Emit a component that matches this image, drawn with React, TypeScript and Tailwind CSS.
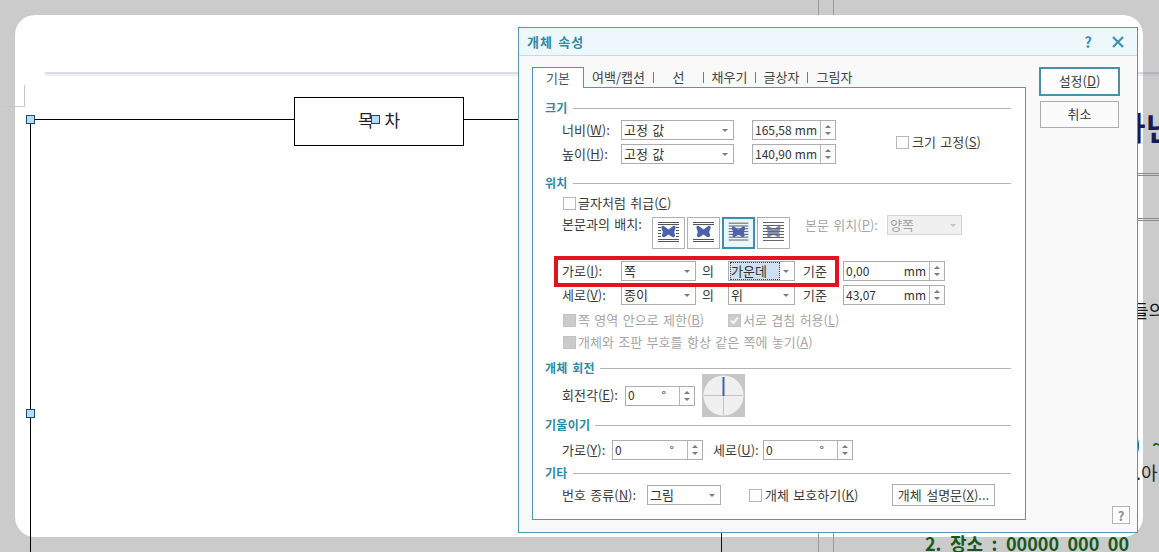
import React from "react";

const teal = "text-[#2b8aa6]";

function Caret({ className = "" }: { className?: string }) {
  return (
    <svg width="6" height="3" viewBox="0 0 6 3" className={"shrink-0 " + className}>
      <polygon points="0,0 6,0 3,3" fill="currentColor" />
    </svg>
  );
}

function SpinArrows() {
  return (
    <div className="w-[15px] shrink-0 border-l border-[#b8b8b8] flex flex-col items-center justify-center gap-[4px] text-[#7c7c7c] bg-[#fbfbfb]">
      <Caret className="rotate-180" />
      <Caret />
    </div>
  );
}

function Spin({ className, value, unit, unitClass = "pr-[3px]" }: { className: string; value: string; unit: string; unitClass?: string }) {
  return (
    <div className={"flex h-5 shrink-0 border border-[#adadad] bg-white " + className}>
      <div className={"flex-1 flex items-center justify-between pl-[2px] pb-px text-[12px] text-[#333] " + unitClass}>
        <span>{value}</span>
        <span>{unit}</span>
      </div>
      <SpinArrows />
    </div>
  );
}

function Combo({ className, value, focus = false, disabled = false }: { className: string; value: string; focus?: boolean; disabled?: boolean }) {
  return (
    <div
      className={
        "flex h-5 shrink-0 items-center border justify-between text-[13px] leading-none " +
        (disabled ? "border-[#d4d4d4] bg-[#f0f0f0] text-[#a0a0a0] " : "border-[#adadad] bg-white text-[#333] ") +
        className
      }
    >
      {focus ? (
        <span className="ml-px w-[50px] h-[18px] flex items-center pb-[2px] bg-[#cfe0f1] border border-dotted border-[#444]">{value}</span>
      ) : (
        <span className="pl-[2px] pb-[2px]">{value}</span>
      )}
      <Caret className={"mr-[5px] " + (disabled ? "text-[#c4c4c4]" : "text-[#7c7c7c]")} />
    </div>
  );
}

function Check({ disabled = false, checked = false }: { disabled?: boolean; checked?: boolean }) {
  return (
    <span
      className={
        "w-[13px] h-[13px] shrink-0 border flex items-center justify-center " +
        (disabled ? "border-[#c4c4c4] bg-[#cbcbcb]" : "border-[#b8b8b8] bg-[#fdfdfd]")
      }
    >
      {checked && (
        <svg width="11" height="11" viewBox="0 0 11 11">
          <path d="M2 5.5 L4.5 8 L9 2.5" stroke="#f4f4f4" strokeWidth="2" fill="none" />
        </svg>
      )}
    </span>
  );
}

function Heading({ children, className = "" }: { children: React.ReactNode; className?: string }) {
  return (
    <div className={"flex items-center h-[14px] gap-[5px] " + className}>
      <span className={"text-[12px] font-bold leading-none tracking-[0.3px] " + teal}>{children}</span>
      <span className="flex-1 h-px bg-[#b2b2b2]" />
    </div>
  );
}

function Label({ className, children, muted = false }: { className: string; children: React.ReactNode; muted?: boolean }) {
  return <span className={"shrink-0 text-[13px] leading-none pb-[2px] whitespace-nowrap " + (muted ? "text-[#a6a6a6] " : "text-[#3c3c3c] ") + className}>{children}</span>;
}

const BUTTERFLY =
  "M16.5 12.5 L11.5 8.8 Q9 8.4 9.4 11 L10.8 15 L9.9 18.2 Q10.2 21 12.8 20 L16.5 17.5 L20.2 20 Q22.8 21 23.1 18.2 L22.2 15 L23.6 11 Q24 8.4 21.5 8.8 Z";

function WrapIcon({ kind }: { kind: number }) {
  const full = (ys: number[], c = "#555") =>
    ys.map((y) => <line key={y} x1="6" x2="27" y1={y} y2={y} stroke={c} strokeWidth="1" />);
  const side = [10.5, 13.5, 16.5, 19.5];
  return (
    <svg width="31" height="30" viewBox="1 1 31 30">
      {kind === 0 && (
        <>
          {full([5.5, 7.5, 22.5, 24.5])}
          {side.map((y) => (
            <g key={y}>
              <line x1="6" x2="9" y1={y} y2={y} stroke="#555" />
              <line x1="24" x2="27" y1={y} y2={y} stroke="#555" />
            </g>
          ))}
          <path d={BUTTERFLY} fill="#4c62ac" />
        </>
      )}
      {kind === 1 && (
        <>
          {full([5.5, 7.5, 22.5, 24.5])}
          <path d={BUTTERFLY} fill="#4c62ac" />
        </>
      )}
      {kind === 2 && (
        <>
          {full([5.5, 8.5, 11.5, 14.5, 17.5, 20.5, 23.5])}
          <path d={BUTTERFLY} fill="#4c62ac" />
        </>
      )}
      {kind === 3 && (
        <>
          <path d={BUTTERFLY} fill="#868eb4" />
          {full([5.5, 8.5, 11.5, 14.5, 17.5, 20.5, 23.5], "#666")}
        </>
      )}
    </svg>
  );
}

function Dial() {
  return (
    <svg width="43" height="43" viewBox="0 0 43 43" className="shrink-0 ml-[7px]">
      <rect width="43" height="43" fill="#c6c6c6" />
      <circle cx="21.5" cy="21.5" r="20" fill="#f0f0f0" />
      <line x1="2" x2="41" y1="21.5" y2="21.5" stroke="#c4c4c4" />
      <line x1="21.5" x2="21.5" y1="21" y2="41" stroke="#c4c4c4" />
      <line x1="21.5" x2="21.5" y1="3" y2="22" stroke="#3f62ad" strokeWidth="2" />
    </svg>
  );
}

function Handle({ className }: { className: string }) {
  return <span className={"absolute w-[9px] h-[9px] border border-[#1c4a68] bg-[#b5dcf9] " + className} />;
}

export default function App() {
  return (
    <div className="relative w-[1159px] h-[552px] overflow-hidden bg-[#cbcbcb] p-[15px] [word-spacing:1.5px] font-['Noto_Sans_CJK_KR','Noto_Sans',sans-serif]">
      <div className="w-[1128px] h-[522px] rounded-[20px] bg-white" />

      {/* document behind the dialog */}
      <span className="absolute left-[818px] top-0 w-px h-[15px] bg-[#9a9a9a]" />
      <span className="absolute left-[833px] top-0 w-px h-[15px] bg-[#9a9a9a]" />
      <span className="absolute left-[721px] top-[532px] w-px h-[20px] bg-[#111]" />
      <span className="absolute left-[818px] top-[532px] w-px h-[20px] bg-[#9a9a9a]" />
      <span className="absolute left-[833px] top-[532px] w-px h-[20px] bg-[#9a9a9a]" />

      <span className="absolute left-[45px] top-[72px] w-[1098px] h-[4px] bg-[#eeedf4] border-t-2 border-[#dcdce8]" />
      <span className="absolute left-[1143px] top-[72px] w-[16px] h-[4px] bg-[#c2c2c8] border-t-2 border-[#b4b4bc]" />
      <span className="absolute left-[1137px] top-[173px] w-[22px] h-px bg-[#8a8a8a]" />
      <span className="absolute left-[1137px] top-[175px] w-[22px] h-px bg-[#8a8a8a]" />
      <span className="absolute left-[1137px] top-[218px] w-[22px] h-px bg-[#8a8a8a]" />
      <span className="absolute left-[1137px] top-[220px] w-[22px] h-px bg-[#8a8a8a]" />

      <span className="absolute left-[24px] top-[85px] w-px h-[21px] bg-[#c8c8c8]" />
      <span className="absolute left-[3px] top-[106px] w-[22px] h-px bg-[#c8c8c8]" />

      <span className="absolute left-[30px] top-[119px] w-[264px] h-px bg-black" />
      <span className="absolute left-[464px] top-[119px] w-[55px] h-px bg-black" />
      <span className="absolute left-[30px] top-[119px] w-px h-[433px] bg-black" />
      <div className="absolute left-[294px] top-[97px] w-[170px] h-[49px] border border-black bg-white flex items-center justify-center pb-[3px] text-[17px] text-[#222] tracking-[2px] [word-spacing:3px] pl-[2px]">
        목 차
      </div>
      <Handle className="left-[26px] top-[115px]" />
      <Handle className="left-[371px] top-[115px]" />
      <Handle className="left-[26px] top-[409px]" />

      <span className="absolute left-[1116px] top-[107px] text-[32px] leading-[38px] font-bold text-[#1b1b52] whitespace-nowrap">바닌</span>
      <span className="absolute left-[1132px] top-[297px] text-[18px] leading-[26px] text-[#111] whitespace-nowrap">들의</span>
      <span className="absolute left-[1133px] top-[431px] text-[20px] leading-[26px] font-bold text-[#17601f] whitespace-nowrap [word-spacing:7px]">) ~</span>
      <span className="absolute left-[1136px] top-[459px] text-[18px] leading-[26px] text-[#222] whitespace-nowrap">.아</span>
      <span className="absolute left-[925px] top-[530px] text-[18px] leading-[26px] font-bold text-[#17591c] whitespace-nowrap [word-spacing:4.4px]">2. 장소 : 00000 000 00</span>

      {/* dialog */}
      <div className="absolute left-[518px] top-[27px] w-[620px] h-[506px] border border-[#4f9bb2] bg-[#f9f9f9] flex flex-col">
        <div className="h-[28px] shrink-0 flex items-center pl-[8px] bg-[#eef7fb] border-b border-[#c6dbe6]">
          <span className={"text-[13px] font-bold leading-none tracking-[1px] " + teal}>개체 속성</span>
          <span className="ml-auto mr-[20px] text-[15px] font-bold leading-none text-[#3a93b2]">?</span>
          <svg width="12" height="12" viewBox="0 0 12 12" className="mr-[13px]">
            <path d="M1 1 L11 11 M11 1 L1 11" stroke="#3a93b2" strokeWidth="2.2" />
          </svg>
        </div>

        <div className="flex pl-[13px] pt-[11px]">
          {/* tabs + panel */}
          <div className="w-[494px] shrink-0">
            <div className="relative z-10 -mb-px flex items-center h-[21px] text-[13px] leading-none text-[#444]">
              <div className="w-[52px] h-[21px] border border-b-0 border-[#4a9ab0] bg-white flex items-center justify-center pb-[2px] text-[#555]">기본</div>
              <div className="w-[69px] text-center pb-[2px]">여백/캡션</div>
              <span className="w-px h-[11px] bg-[#777]" />
              <div className="w-[49px] text-center pb-[2px]">선</div>
              <span className="w-px h-[11px] bg-[#777]" />
              <div className="w-[51px] text-center pb-[2px]">채우기</div>
              <span className="w-px h-[11px] bg-[#777]" />
              <div className="w-[51px] text-center pb-[2px]">글상자</div>
              <span className="w-px h-[11px] bg-[#777]" />
              <div className="w-[53px] text-center pb-[2px]">그림자</div>
            </div>

            <div className="relative h-[433px] border border-[#4a9ab0] bg-white pl-[12px] pr-[14px]">
              <Heading className="mt-[13px]">크기</Heading>
              <div className="flex items-center ml-[17px] mt-[5px]">
                <div className="flex flex-col gap-1">
                  <div className="flex items-center">
                    <Label className="w-[59px]">너비(<u>W</u>):</Label>
                    <Combo className="w-[113px]" value="고정 값" />
                    <Spin className="w-[84px] ml-[18px]" value="165,58" unit="mm" />
                  </div>
                  <div className="flex items-center">
                    <Label className="w-[59px]">높이(<u>H</u>):</Label>
                    <Combo className="w-[113px]" value="고정 값" />
                    <Spin className="w-[84px] ml-[18px]" value="140,90" unit="mm" />
                  </div>
                </div>
                <div className="flex items-center ml-[60px] gap-[3px]">
                  <Check />
                  <Label className="">크기 고정(<u>S</u>)</Label>
                </div>
              </div>

              <Heading className="mt-[12px]">위치</Heading>
              <div className="flex items-center ml-[18px] mt-[6px] h-[14px] gap-[2px]">
                <Check />
                <Label className="">글자처럼 취급(<u>C</u>)</Label>
              </div>
              <div className="flex items-start ml-[17px] mt-[7px]">
                <Label className="w-[90px]">본문과의 배치:</Label>
                <div className="flex gap-[2px]">
                  {[0, 1, 2, 3].map((k) => (
                    <div
                      key={k}
                      className={
                        "w-[33px] h-[32px] flex items-center justify-center " +
                        (k === 2 ? "border-2 border-[#3d8fb0] bg-[#e9f6fb]" : "border border-[#b0b0b0] bg-white")
                      }
                    >
                      <WrapIcon kind={k} />
                    </div>
                  ))}
                </div>
                <Label muted className="ml-[15px] w-[82px] mt-[1px]">본문 위치(<u>P</u>):</Label>
                <Combo disabled className="w-[75px] -mt-[2px]" value="양쪽" />
              </div>

              <div className="flex items-center ml-[17px] mt-[12px]">
                <Label className="w-[59px]">가로(<u>I</u>):</Label>
                <Combo className="w-[75px]" value="쪽" />
                <Label className="w-[32px] pl-[6px]">의</Label>
                <Combo focus className="w-[67px]" value="가운데" />
                <Label className="w-[48px] pl-[8px]">기준</Label>
                <Spin className="w-[102px]" value="0,00" unit="mm" />
              </div>
              <div className="flex items-center ml-[17px] mt-[4px]">
                <Label className="w-[59px]">세로(<u>V</u>):</Label>
                <Combo className="w-[75px]" value="종이" />
                <Label className="w-[32px] pl-[6px]">의</Label>
                <Combo className="w-[67px]" value="위" />
                <Label className="w-[48px] pl-[8px]">기준</Label>
                <Spin className="w-[102px]" value="43,07" unit="mm" />
              </div>

              <div className="flex items-center ml-[18px] mt-[9px] h-[13px]">
                <div className="w-[165px] flex items-center gap-[2px]">
                  <Check disabled />
                  <Label muted className="">쪽 영역 안으로 제한(<u>B</u>)</Label>
                </div>
                <div className="flex items-center gap-[2px]">
                  <Check disabled checked />
                  <Label muted className="">서로 겹침 허용(<u>L</u>)</Label>
                </div>
              </div>
              <div className="flex items-center ml-[18px] mt-[9px] h-[13px] gap-[2px]">
                <Check disabled />
                <Label muted className="">개체와 조판 부호를 항상 같은 쪽에 놓기(<u>A</u>)</Label>
              </div>

              <Heading className="mt-[12px]">개체 회전</Heading>
              <div className="flex items-center ml-[17px] -mt-px">
                <Label className="w-[63px]">회전각(<u>E</u>):</Label>
                <Spin className="w-[70px]" value="0" unit="°" unitClass="pr-[13px]" />
                <Dial />
              </div>

              <Heading className="mt-px">기울이기</Heading>
              <div className="flex items-center ml-[17px] mt-[8px]">
                <Label className="w-[50px]">가로(<u>Y</u>):</Label>
                <Spin className="w-[91px]" value="0" unit="°" unitClass="pr-[13px]" />
                <Label className="w-[50px] ml-[10px]">세로(<u>U</u>):</Label>
                <Spin className="w-[90px]" value="0" unit="°" unitClass="pr-[13px]" />
              </div>

              <Heading className="mt-[6px]">기타</Heading>
              <div className="flex items-center ml-[17px] mt-[4px]">
                <Label className="w-[85px]">번호 종류(<u>N</u>):</Label>
                <Combo className="w-[74px]" value="그림" />
                <div className="ml-[28px] w-[143px] flex items-center gap-[3px]">
                  <Check />
                  <Label className="">개체 보호하기(<u>K</u>)</Label>
                </div>
                <div className="w-[103px] h-[22px] border border-[#adadad] bg-white flex items-center justify-center pb-[2px] text-[13px] leading-none text-[#3c3c3c] whitespace-nowrap">
                  개체 설명문(<u>X</u>)...
                </div>
              </div>

              <div className="absolute left-[21px] top-[168px] w-[285px] h-[31px] border-[4px] border-[#e2131f] pointer-events-none" />
            </div>
          </div>

          {/* buttons */}
          <div className="ml-[13px] w-[91px] h-[457px] flex flex-col text-[13px] leading-none text-[#3c3c3c]">
            <div className="w-[81px] h-[29px] border-2 border-[#4a8fae] bg-[#fdfdfd] flex items-center justify-center pb-[2px]">
              설정(<u>D</u>)
            </div>
            <div className="w-[79px] h-[27px] ml-px mt-[5px] border border-[#adadad] bg-[#fbfbfb] flex items-center justify-center pb-[2px]">취소</div>
            <div className="mt-auto self-end w-[18px] h-[18px] border border-[#b4b4b4] bg-white flex items-center justify-center text-[13px] font-bold text-[#8a8a8a]">?</div>
          </div>
        </div>
      </div>
    </div>
  );
}
